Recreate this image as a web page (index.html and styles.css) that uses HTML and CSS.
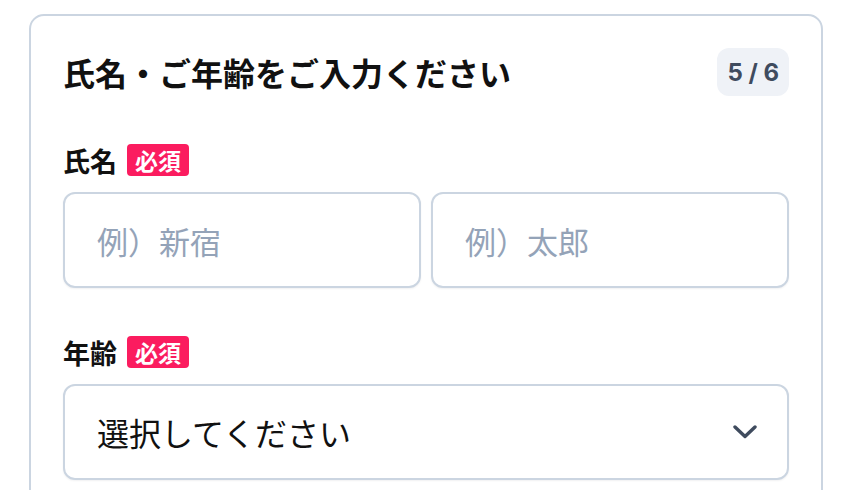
FILE: index.html
```html
<!DOCTYPE html>
<html lang="ja">
<head>
<meta charset="utf-8">
<title>氏名・ご年齢</title>
<link rel="stylesheet" href="styles.css">
</head>
<body>
<div class="page">
  <section class="card">
    <header class="card-head">
      <h1 class="title">氏名・ご年齢をご入力ください</h1>
      <span class="step">5 / 6</span>
    </header>

    <div class="field">
      <div class="label-row">
        <span class="label">氏名</span>
        <span class="badge">必須</span>
      </div>
      <div class="name-row">
        <input class="input" type="text" placeholder="例）新宿">
        <input class="input" type="text" placeholder="例）太郎">
      </div>
    </div>

    <div class="field">
      <div class="label-row">
        <span class="label">年齢</span>
        <span class="badge">必須</span>
      </div>
      <div class="select" role="combobox">
        <span class="select-text">選択してください</span>
        <svg class="chevron" width="24" height="14" viewBox="0 0 24 14" aria-hidden="true">
          <path d="M2 2 L12 11.5 L22 2" fill="none" stroke="#3f4b5e" stroke-width="3.4" stroke-linecap="round" stroke-linejoin="round"/>
        </svg>
      </div>
    </div>
  </section>
</div>
</body>
</html>
```

FILE: styles.css
```css
* {
  box-sizing: border-box;
}

html, body {
  margin: 0;
  padding: 0;
  background: #ffffff;
}

body {
  font-family: "Noto Sans CJK JP", "Noto Sans", sans-serif;
  color: #111111;
}

.page {
  padding: 14px 23px 0 29px;
}

.card {
  border: 2px solid #cbd5e1;
  border-radius: 15px;
  padding: 32px 32px 40px;
  display: flex;
  flex-direction: column;
  gap: 48px;
  background: #ffffff;
}

.card-head {
  display: flex;
  align-items: center;
  justify-content: space-between;
  height: 48px;
}

.title {
  margin: 0;
  font-size: 32px;
  font-weight: 700;
  line-height: 1;
  color: #111111;
}

.step {
  display: flex;
  align-items: center;
  height: 48px;
  padding: 0 10px;
  border-radius: 12px;
  background: #eff2f7;
  color: #3f4b5e;
  font-family: Inter, "Liberation Sans", sans-serif;
  font-size: 24px;
  font-weight: 700;
}

.field {
  display: flex;
  flex-direction: column;
  gap: 16px;
}

.label-row {
  display: flex;
  align-items: center;
  gap: 10px;
  height: 32px;
}

.label {
  font-size: 27px;
  font-weight: 700;
  line-height: 1;
  color: #111111;
}

.badge {
  display: flex;
  align-items: center;
  height: 32px;
  padding: 0 8px;
  border-radius: 4px;
  background: #fb1c5f;
  color: #ffffff;
  font-size: 23px;
  font-weight: 700;
  line-height: 1;
}

.name-row {
  display: grid;
  grid-template-columns: 1fr 1fr;
  gap: 10px;
}

.input {
  width: 100%;
  height: 96px;
  margin: 0;
  padding: 0 32px;
  border: 2px solid #cbd5e1;
  border-radius: 12px;
  background: #ffffff;
  box-shadow: 0 1px 2px rgba(15, 23, 42, 0.06);
  font-family: "Noto Sans CJK JP", "Noto Sans", sans-serif;
  font-size: 31px;
  color: #111111;
  outline: none;
}

.input::placeholder {
  color: #94a3b8;
  opacity: 1;
}

.select {
  display: flex;
  align-items: center;
  justify-content: space-between;
  height: 96px;
  padding: 0 30px 0 32px;
  border: 2px solid #cbd5e1;
  border-radius: 12px;
  background: #ffffff;
  box-shadow: 0 1px 2px rgba(15, 23, 42, 0.06);
}

.select-text {
  font-size: 32px;
  line-height: 1;
  color: #111111;
}

.chevron {
  display: block;
  flex: none;
}
```
